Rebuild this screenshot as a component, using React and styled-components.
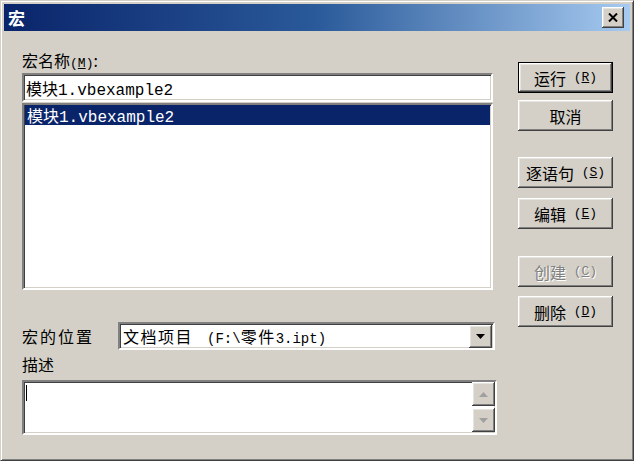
import React from "react";
import styled, { createGlobalStyle } from "styled-components";

const Global = createGlobalStyle`
  html, body { margin: 0; padding: 0; background: #d4d0c8; }
  body { font-family: "Noto Sans CJK SC", "Liberation Sans", sans-serif; }
  * { box-sizing: border-box; }
`;

const CJK = `"Noto Sans CJK SC", "Liberation Sans", sans-serif`;
const MONO = `"Liberation Mono", "Noto Sans CJK SC", monospace`;

const Window = styled.div`
  width: 634px;
  height: 461px;
  background: #d4d0c8;
  border: 1px solid;
  border-color: #d4d0c8 #404040 #404040 #d4d0c8;
  box-shadow: inset 1px 1px #ffffff, inset -1px -1px #808080;
  padding: 3px;
  display: flex;
  flex-direction: column;
`;

const TitleBar = styled.div`
  height: 27px;
  display: flex;
  align-items: center;
  justify-content: space-between;
  padding: 0 6px 0 4px;
  background: linear-gradient(to right, #0a246a 0%, #2a5a9a 50%, #a6caf0 100%);
`;

const Title = styled.span`
  color: #fff;
  font-family: ${CJK};
  font-weight: 700;
  font-size: 17px;
  line-height: 20px;
`;

const raised = `
  background: #d4d0c8;
  box-shadow: inset -1px -1px #404040, inset 1px 1px #ffffff,
    inset -2px -2px #808080, inset 2px 2px #e6e4de;
`;

const CloseBtn = styled.div`
  width: 22px;
  height: 21px;
  ${raised}
  display: flex;
  align-items: center;
  justify-content: center;
`;

const Body = styled.div`
  flex: 1;
  display: flex;
  padding-left: 18px;
`;

const Main = styled.div`
  width: 475px;
  display: flex;
  flex-direction: column;
  padding-top: 20px;
`;

const Label = styled.div`
  font-family: ${CJK};
  font-size: 16px;
  line-height: 18px;
  height: 18px;
  color: #000;
  margin-top: ${p => p.$mt || 0}px;
  letter-spacing: ${p => p.$ls || 0}px;
  white-space: nowrap;
  width: ${p => (p.$w ? `${p.$w}px` : "auto")};
  flex-shrink: 0;
`;

const Mn = styled.span`
  font-family: ${MONO};
  font-size: 13px;
  letter-spacing: 0;
`;

const sunken = `
  background: #fff;
  border: 2px solid;
  border-color: #808080 #ffffff #ffffff #808080;
  box-shadow: inset 1px 1px #404040, inset -1px -1px #d4d0c8;
`;

const Input = styled.div`
  ${sunken}
  width: 471px;
  height: 29px;
  margin-top: 4px;
  padding: 0 2px;
  display: flex;
  align-items: center;
  font-family: ${MONO};
  font-size: 16px;
  color: #000;
`;

const List = styled.div`
  ${sunken}
  width: 471px;
  height: 187px;
  margin-top: 1px;
  padding: 0;
`;

const ListItem = styled.div`
  height: 20px;
  margin: 0 1px;
  padding-left: 2px;
  display: flex;
  align-items: center;
  font-family: ${MONO};
  font-size: 16px;
  background: ${p => (p.$selected ? "#0a246a" : "transparent")};
  color: ${p => (p.$selected ? "#fff" : "#000")};
`;

const Row = styled.div`
  display: flex;
  align-items: center;
  margin-top: 32px;
  height: 28px;
`;

const Combo = styled.div`
  ${sunken}
  width: 377px;
  height: 28px;
  display: flex;
  align-items: center;
  justify-content: space-between;
  padding: 0 0 0 3px;
`;

const ComboText = styled.span`
  font-family: ${CJK};
  font-size: 16px;
  letter-spacing: 1.5px;
  white-space: pre;
  color: #000;
`;

const ComboPath = styled.span`
  font-family: ${MONO};
  font-size: 14px;
  letter-spacing: 0;
  margin-left: ${p => p.$ml || 0}px;
`;

const DropBtn = styled.div`
  width: 23px;
  height: 23px;
  margin-right: 1px;
  ${raised}
  display: flex;
  align-items: center;
  justify-content: center;
`;

const TextArea = styled.div`
  ${sunken}
  width: 475px;
  height: 55px;
  margin-top: 7px;
  display: flex;
  justify-content: space-between;
`;

const Caret = styled.div`
  width: 1px;
  height: 16px;
  background: #000;
  margin: 3px 0 0 2px;
`;

const ScrollCol = styled.div`
  width: 23px;
  display: flex;
  flex-direction: column;
  gap: 2px;
  padding: 0 0 1px 0;
`;

const ScrollBtn = styled.div`
  flex: 1;
  ${raised}
  display: flex;
  align-items: center;
  justify-content: center;
`;

const Side = styled.div`
  margin-left: 21px;
  padding-top: 31px;
  display: flex;
  flex-direction: column;
`;

const Button = styled.div`
  width: 95px;
  height: 31px;
  margin-top: ${p => p.$mt || 0}px;
  ${raised}
  border: ${p => (p.$default ? "1px solid #000" : "none")};
  display: flex;
  align-items: center;
  justify-content: center;
  font-family: ${CJK};
  font-size: 16px;
  color: ${p => (p.$disabled ? "#808080" : "#000")};
  text-shadow: ${p => (p.$disabled ? "1px 1px #ffffff" : "none")};
  white-space: nowrap;
`;

const Arrow = ({ dir, color }) => (
  <svg width="9" height="5" viewBox="0 0 9 5">
    {dir === "down" ? (
      <polygon points="0,0 9,0 4.5,5" fill={color} />
    ) : (
      <polygon points="0,5 9,5 4.5,0" fill={color} />
    )}
  </svg>
);

const buttons = [
  { text: "运行", key: "R", mt: 0, def: true },
  { text: "取消", key: null, mt: 7 },
  { text: "逐语句", key: "S", mt: 26 },
  { text: "编辑", key: "E", mt: 10 },
  { text: "创建", key: "C", mt: 27, disabled: true },
  { text: "删除", key: "D", mt: 9 },
];

export default function App() {
  return (
    <>
      <Global />
      <Window>
        <TitleBar>
          <Title>宏</Title>
          <CloseBtn>
            <svg width="10" height="9" viewBox="0 0 10 9">
              <path d="M1 0.5 L9 8.5 M9 0.5 L1 8.5" stroke="#000" strokeWidth="2" />
            </svg>
          </CloseBtn>
        </TitleBar>
        <Body>
          <Main>
            <Label>
              宏名称<Mn>(<u>M</u>)</Mn>:
            </Label>
            <Input>模块1.vbexample2</Input>
            <List>
              <ListItem $selected>模块1.vbexample2</ListItem>
            </List>
            <Row>
              <Label $w={96} $ls={2}>宏的位置</Label>
              <Combo>
                <ComboText>
                  文档项目<ComboPath $ml={14}>(F:\</ComboPath>零件<ComboPath>3.ipt)</ComboPath>
                </ComboText>
                <DropBtn>
                  <Arrow dir="down" color="#000" />
                </DropBtn>
              </Combo>
            </Row>
            <Label $mt={5}>描述</Label>
            <TextArea>
              <Caret />
              <ScrollCol>
                <ScrollBtn>
                  <Arrow dir="up" color="#a0a0a0" />
                </ScrollBtn>
                <ScrollBtn>
                  <Arrow dir="down" color="#a0a0a0" />
                </ScrollBtn>
              </ScrollCol>
            </TextArea>
          </Main>
          <Side>
            {buttons.map(b => (
              <Button key={b.text} $mt={b.mt} $default={b.def} $disabled={b.disabled}>
                {b.text}
                {b.key && (
                  <Mn>
                    &nbsp;(<u>{b.key}</u>)
                  </Mn>
                )}
              </Button>
            ))}
          </Side>
        </Body>
      </Window>
    </>
  );
}
